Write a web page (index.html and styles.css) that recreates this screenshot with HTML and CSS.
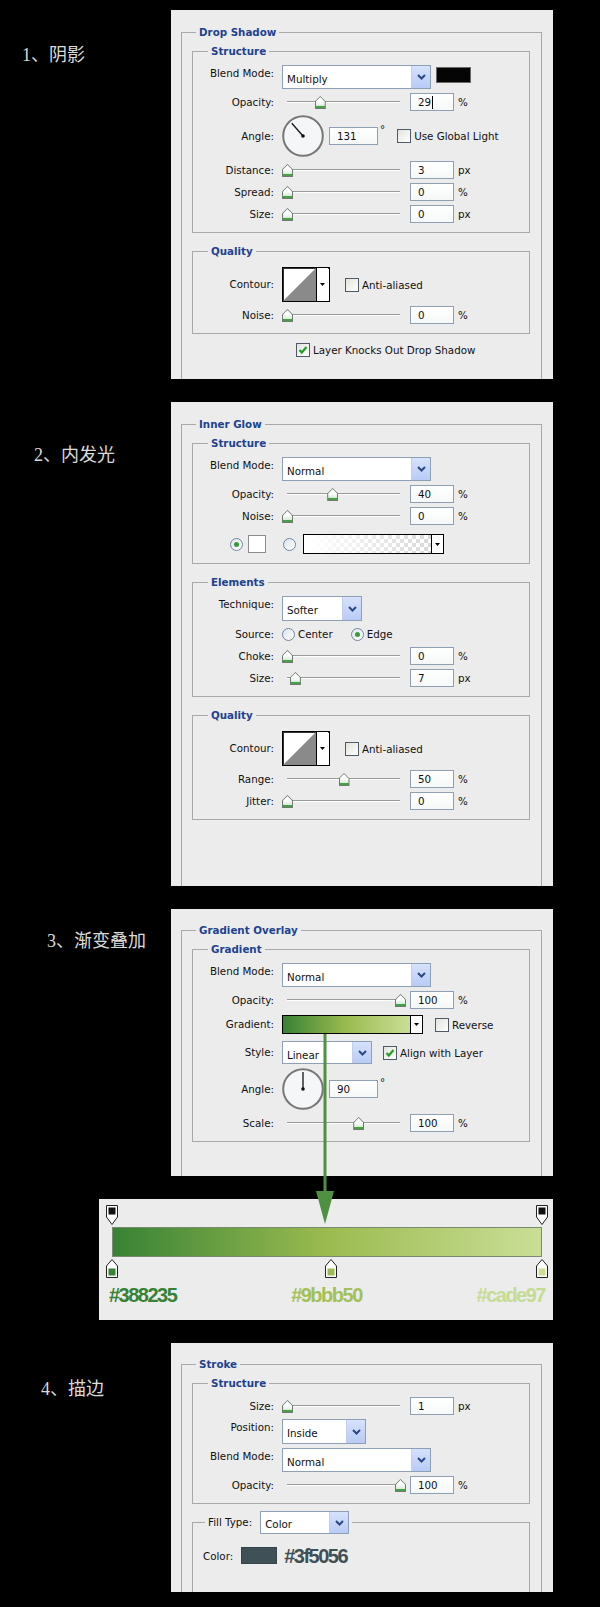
FILE: index.html
```html
<!DOCTYPE html>
<html lang="zh-CN">
<head>
  <meta charset="UTF-8" />
  <title>图层样式 - 阴影 / 内发光 / 渐变叠加 / 描边</title>
  <link rel="stylesheet" href="styles.css">
</head>
<body>

<div class="page">

  <!-- 1. Drop Shadow -->
  <section class="step step-1">
    <h2 class="step-title">1、阴影</h2>
    <div class="panel panel-1">
      <fieldset class="group group-outer">
        <legend>Drop Shadow</legend>
        <fieldset class="group">
          <legend>Structure</legend>
          <div class="rows">
            <div class="row row-select">
              <span class="lbl">Blend Mode:</span>
              <div class="select select-blend"><span class="select-text">Multiply</span><span class="select-btn"><svg width="9" height="6" viewBox="0 0 9 6"><path d="M1 1l3.5 3.5L8 1"/></svg></span></div>
              <span class="color-chip"></span>
            </div>
            <div class="row">
              <span class="lbl">Opacity:</span>
              <div class="slider"><div class="track"><span class="thumb" style="left: 29%"></span></div></div>
              <span class="num">29<i class="caret"></i></span>
              <span class="unit">%</span>
            </div>
            <div class="row row-dial">
              <span class="lbl">Angle:</span>
              <svg class="dial" width="42" height="42" viewBox="0 0 42 42"><circle class="dial-face" cx="21" cy="21" r="19.8"/><line class="dial-hand" x1="21" y1="21" x2="9.8" y2="8.2"/><circle class="dial-pin" cx="21" cy="21" r="1.8"/></svg>
              <span class="num num-angle">131</span>
              <span class="deg">°</span>
              <span class="check check-global"></span>
              <span class="check-text">Use Global Light</span>
            </div>
            <div class="row">
              <span class="lbl">Distance:</span>
              <div class="slider"><div class="track"><span class="thumb" style="left: 0%"></span></div></div>
              <span class="num">3</span>
              <span class="unit">px</span>
            </div>
            <div class="row">
              <span class="lbl">Spread:</span>
              <div class="slider"><div class="track"><span class="thumb" style="left: 0%"></span></div></div>
              <span class="num">0</span>
              <span class="unit">%</span>
            </div>
            <div class="row">
              <span class="lbl">Size:</span>
              <div class="slider"><div class="track"><span class="thumb" style="left: 0%"></span></div></div>
              <span class="num">0</span>
              <span class="unit">px</span>
            </div>
          </div>
        </fieldset>
        <fieldset class="group">
          <legend>Quality</legend>
          <div class="rows">
            <div class="row row-contour">
              <span class="lbl">Contour:</span>
              <div class="contour">
                <svg class="contour-graph" width="33" height="33" viewBox="0 0 33 33"><polygon points="0,33 33,0 33,33"/></svg>
                <span class="drop-btn"><svg width="5" height="3" viewBox="0 0 5 3"><path d="M0 0h5L2.5 3z"/></svg></span>
              </div>
              <span class="check check-aa"></span>
              <span class="check-text">Anti-aliased</span>
            </div>
            <div class="row">
              <span class="lbl">Noise:</span>
              <div class="slider"><div class="track"><span class="thumb" style="left: 0%"></span></div></div>
              <span class="num">0</span>
              <span class="unit">%</span>
            </div>
          </div>
        </fieldset>
        <div class="row row-knock">
          <span class="check"><svg width="10" height="10" viewBox="0 0 10 10"><path d="M1.5 5l2.3 2.5L8.5 2"/></svg></span>
          <span class="check-text">Layer Knocks Out Drop Shadow</span>
        </div>
      </fieldset>
    </div>
  </section>

  <!-- 2. Inner Glow -->
  <section class="step step-2">
    <h2 class="step-title">2、内发光</h2>
    <div class="panel panel-2">
      <fieldset class="group group-outer">
        <legend>Inner Glow</legend>
        <fieldset class="group">
          <legend>Structure</legend>
          <div class="rows">
            <div class="row row-select">
              <span class="lbl">Blend Mode:</span>
              <div class="select select-blend"><span class="select-text">Normal</span><span class="select-btn"><svg width="9" height="6" viewBox="0 0 9 6"><path d="M1 1l3.5 3.5L8 1"/></svg></span></div>
            </div>
            <div class="row">
              <span class="lbl">Opacity:</span>
              <div class="slider"><div class="track"><span class="thumb" style="left: 40%"></span></div></div>
              <span class="num">40</span>
              <span class="unit">%</span>
            </div>
            <div class="row">
              <span class="lbl">Noise:</span>
              <div class="slider"><div class="track"><span class="thumb" style="left: 0%"></span></div></div>
              <span class="num">0</span>
              <span class="unit">%</span>
            </div>
            <div class="row row-fill">
              <span class="radio on"></span>
              <span class="fill-chip"></span>
              <span class="radio radio-gradient"></span>
              <div class="grad-picker">
                <span class="grad-preview"></span>
                <span class="drop-btn"><svg width="5" height="3" viewBox="0 0 5 3"><path d="M0 0h5L2.5 3z"/></svg></span>
              </div>
            </div>
          </div>
        </fieldset>
        <fieldset class="group">
          <legend>Elements</legend>
          <div class="rows">
            <div class="row row-select row-select-tall">
              <span class="lbl">Technique:</span>
              <div class="select select-technique"><span class="select-text">Softer</span><span class="select-btn"><svg width="9" height="6" viewBox="0 0 9 6"><path d="M1 1l3.5 3.5L8 1"/></svg></span></div>
            </div>
            <div class="row">
              <span class="lbl">Source:</span>
              <span class="radio"></span>
              <span class="check-text">Center</span>
              <span class="radio on radio-edge"></span>
              <span class="check-text">Edge</span>
            </div>
            <div class="row">
              <span class="lbl">Choke:</span>
              <div class="slider"><div class="track"><span class="thumb" style="left: 0%"></span></div></div>
              <span class="num">0</span>
              <span class="unit">%</span>
            </div>
            <div class="row">
              <span class="lbl">Size:</span>
              <div class="slider"><div class="track"><span class="thumb" style="left: 7%"></span></div></div>
              <span class="num">7</span>
              <span class="unit">px</span>
            </div>
          </div>
        </fieldset>
        <fieldset class="group">
          <legend>Quality</legend>
          <div class="rows">
            <div class="row row-contour">
              <span class="lbl">Contour:</span>
              <div class="contour">
                <svg class="contour-graph" width="33" height="33" viewBox="0 0 33 33"><polygon points="0,33 33,0 33,33"/></svg>
                <span class="drop-btn"><svg width="5" height="3" viewBox="0 0 5 3"><path d="M0 0h5L2.5 3z"/></svg></span>
              </div>
              <span class="check check-aa"></span>
              <span class="check-text">Anti-aliased</span>
            </div>
            <div class="row">
              <span class="lbl">Range:</span>
              <div class="slider"><div class="track"><span class="thumb" style="left: 50%"></span></div></div>
              <span class="num">50</span>
              <span class="unit">%</span>
            </div>
            <div class="row">
              <span class="lbl">Jitter:</span>
              <div class="slider"><div class="track"><span class="thumb" style="left: 0%"></span></div></div>
              <span class="num">0</span>
              <span class="unit">%</span>
            </div>
          </div>
        </fieldset>
      </fieldset>
    </div>
  </section>

  <!-- 3. Gradient Overlay -->
  <section class="step step-3">
    <h2 class="step-title">3、渐变叠加</h2>
    <div class="panel panel-3">
      <fieldset class="group group-outer">
        <legend>Gradient Overlay</legend>
        <fieldset class="group">
          <legend>Gradient</legend>
          <div class="rows">
            <div class="row row-select">
              <span class="lbl">Blend Mode:</span>
              <div class="select select-blend"><span class="select-text">Normal</span><span class="select-btn"><svg width="9" height="6" viewBox="0 0 9 6"><path d="M1 1l3.5 3.5L8 1"/></svg></span></div>
            </div>
            <div class="row">
              <span class="lbl">Opacity:</span>
              <div class="slider"><div class="track"><span class="thumb" style="left: 100%"></span></div></div>
              <span class="num">100</span>
              <span class="unit">%</span>
            </div>
            <div class="row row-gradient">
              <span class="lbl">Gradient:</span>
              <div class="grad-bar">
                <span class="grad-fill"></span>
                <span class="drop-btn"><svg width="5" height="3" viewBox="0 0 5 3"><path d="M0 0h5L2.5 3z"/></svg></span>
              </div>
              <span class="check check-reverse"></span>
              <span class="check-text">Reverse</span>
            </div>
            <div class="row row-select row-style">
              <span class="lbl">Style:</span>
              <div class="select select-style"><span class="select-text">Linear</span><span class="select-btn"><svg width="9" height="6" viewBox="0 0 9 6"><path d="M1 1l3.5 3.5L8 1"/></svg></span></div>
              <span class="check check-align"><svg width="10" height="10" viewBox="0 0 10 10"><path d="M1.5 5l2.3 2.5L8.5 2"/></svg></span>
              <span class="check-text">Align with Layer</span>
            </div>
            <div class="row row-dial">
              <span class="lbl">Angle:</span>
              <svg class="dial" width="42" height="42" viewBox="0 0 42 42"><circle class="dial-face" cx="21" cy="21" r="19.8"/><line class="dial-hand" x1="21" y1="21" x2="21" y2="4"/><circle class="dial-pin" cx="21" cy="21" r="1.8"/></svg>
              <span class="num num-angle">90</span>
              <span class="deg">°</span>
            </div>
            <div class="row">
              <span class="lbl">Scale:</span>
              <div class="slider"><div class="track"><span class="thumb" style="left: 63%"></span></div></div>
              <span class="num">100</span>
              <span class="unit">%</span>
            </div>
          </div>
        </fieldset>
      </fieldset>
    </div>
  </section>

  <!-- gradient stops detail -->
  <div class="gradient-detail">
    <div class="stops">
      <span class="stop" style="left: 0%"><svg width="12" height="20" viewBox="0 0 12 20"><path class="stop-shape" d="M.5 .5h11V12L6 19.5 .5 12z"/><rect x="2.5" y="2.5" width="7" height="7" fill="#111"/></svg></span>
      <span class="stop" style="left: 100%"><svg width="12" height="20" viewBox="0 0 12 20"><path class="stop-shape" d="M.5 .5h11V12L6 19.5 .5 12z"/><rect x="2.5" y="2.5" width="7" height="7" fill="#111"/></svg></span>
    </div>
    <div class="gradient-bar"></div>
    <div class="stops stops-bottom">
      <span class="stop" style="left: 0%"><svg width="12" height="19" viewBox="0 0 12 19"><path class="stop-shape" d="M6 .5L11.5 7v11.5H.5V7z"/><rect x="2.5" y="9.5" width="7" height="7" fill="#388235"/></svg></span>
      <span class="stop" style="left: 51%"><svg width="12" height="19" viewBox="0 0 12 19"><path class="stop-shape" d="M6 .5L11.5 7v11.5H.5V7z"/><rect x="2.5" y="9.5" width="7" height="7" fill="#9bbb50"/></svg></span>
      <span class="stop" style="left: 100%"><svg width="12" height="19" viewBox="0 0 12 19"><path class="stop-shape" d="M6 .5L11.5 7v11.5H.5V7z"/><rect x="2.5" y="9.5" width="7" height="7" fill="#cade97"/></svg></span>
    </div>
    <div class="hex-row">
      <span class="hex hex-dark">#388235</span>
      <span class="hex hex-mid">#9bbb50</span>
      <span class="hex hex-light">#cade97</span>
    </div>
  </div>

  <!-- 4. Stroke -->
  <section class="step step-4">
    <h2 class="step-title">4、描边</h2>
    <div class="panel panel-4">
      <fieldset class="group group-outer">
        <legend>Stroke</legend>
        <fieldset class="group">
          <legend>Structure</legend>
          <div class="rows">
            <div class="row">
              <span class="lbl">Size:</span>
              <div class="slider"><div class="track"><span class="thumb" style="left: 0%"></span></div></div>
              <span class="num">1</span>
              <span class="unit">px</span>
            </div>
            <div class="row row-select row-select-tall">
              <span class="lbl">Position:</span>
              <div class="select select-position"><span class="select-text">Inside</span><span class="select-btn"><svg width="9" height="6" viewBox="0 0 9 6"><path d="M1 1l3.5 3.5L8 1"/></svg></span></div>
            </div>
            <div class="row row-select">
              <span class="lbl">Blend Mode:</span>
              <div class="select select-blend"><span class="select-text">Normal</span><span class="select-btn"><svg width="9" height="6" viewBox="0 0 9 6"><path d="M1 1l3.5 3.5L8 1"/></svg></span></div>
            </div>
            <div class="row">
              <span class="lbl">Opacity:</span>
              <div class="slider"><div class="track"><span class="thumb" style="left: 100%"></span></div></div>
              <span class="num">100</span>
              <span class="unit">%</span>
            </div>
          </div>
        </fieldset>
        <fieldset class="group group-fill">
          <legend class="fill-legend">
            <span>Fill Type:</span>
            <span class="select select-fill"><span class="select-text">Color</span><span class="select-btn"><svg width="9" height="6" viewBox="0 0 9 6"><path d="M1 1l3.5 3.5L8 1"/></svg></span></span>
          </legend>
          <div class="color-row">
            <span>Color:</span>
            <span class="stroke-chip"></span>
            <span class="hex hex-stroke">#3f5056</span>
          </div>
        </fieldset>
      </fieldset>
    </div>
  </section>

  <!-- arrow from gradient bar down to the stops detail -->
  <svg class="arrow" width="18" height="190" viewBox="0 0 18 190"><rect x="7.5" y="0" width="3" height="158"/><path d="M0 157H18L9 190z"/></svg>

</div>

</body>
</html>
```

FILE: styles.css
```css
body {
  margin: 0;
  background-color: #000;
  font-family: "DejaVu Sans", Verdana, sans-serif;
  font-size: 10.3px;
  color: #111;
}
.page {
  position: relative;
  width: 600px;
  padding-top: 10px;
  display: flex;
  flex-direction: column;
  gap: 23px;
}

/* left hand captions */
.step {
  display: flex;
}
.step-title {
  width: 171px;
  margin: 0;
  box-sizing: border-box;
  font-family: "Liberation Serif", "Noto Sans CJK SC", serif;
  font-size: 18px;
  font-weight: normal;
  line-height: 18px;
  color: #dadada;
}
.step-1 .step-title { padding: 36px 0 0 22px; }
.step-2 .step-title { padding: 44px 0 0 34px; }
.step-3 .step-title { padding: 23px 0 0 47px; }
.step-4 .step-title { padding: 37px 0 0 41px; }

/* dialog panels */
.panel {
  width: 382px;
  box-sizing: border-box;
  padding: 15px 11px 0 10px;
  background-color: #ececec;
  display: flex;
  flex-direction: column;
  overflow: hidden;
}
.panel-1 { height: 369px; padding-top: 16px; }
.panel-2 { height: 484px; padding-top: 16px; }
.panel-3 { height: 267px; }
.panel-4 { height: 249px; }

fieldset.group {
  margin: 0;
  padding: 7px 0 9px;
  border: 1px solid #a9a9a9;
  min-width: 0;
}
.group legend {
  margin-left: 15px;
  padding: 0 3px;
  font-weight: bold;
  line-height: 13px;
  color: #1e428f;
}
fieldset.group-outer {
  flex: 1;
  padding: 6px 11px 0 10px;
  border-bottom: none;
}
/* the legend already sits after the fieldset's 10px left padding */
.group-outer > legend {
  margin-left: 4px;
}
.group + .group {
  margin-top: 12px;
}

/* rows */
.rows {
  display: flex;
  flex-direction: column;
  gap: 4px;
}
.row {
  display: flex;
  align-items: center;
  height: 18px;
}
.row-select {
  height: 24px;
  align-items: flex-start;
}
.row-select .lbl {
  padding-top: 2px;
}
.row-select-tall { height: 25px; }
.row-dial { height: 42px; }
.row-contour { height: 35px; margin-top: 2px; }
.row-gradient { height: 19px; margin-top: 2px; }
.row-style { height: 23px; margin-top: 3px; align-items: center; }
.row-style .lbl { padding-top: 0; }
.row-fill { height: 20px; margin-top: 5px; padding-left: 37px; }
.row-knock { height: 14px; margin-top: 9px; padding-left: 104px; }

.lbl {
  flex: none;
  width: 81px;
  margin-right: 8px;
  text-align: right;
  line-height: 13px;
}

/* drop-down */
.select {
  display: flex;
  height: 100%;
  box-sizing: border-box;
  border: 1px solid #8ea0b6;
  background-color: #fff;
  flex: none;
}
.select-text {
  flex: 1;
  padding: 7px 0 0 4px;
  line-height: 13px;
}
.select-btn {
  width: 18px;
  display: flex;
  align-items: center;
  justify-content: center;
  background: linear-gradient(#d6e1fc, #b9cbf5);
  border-left: 1px solid #c3d0ec;
}
.select-btn svg {
  fill: none;
  stroke: #2b4885;
  stroke-width: 2;
}
.select-blend { width: 149px; }
.select-technique { width: 80px; }
.select-position { width: 84px; }
.select-style { width: 90px; }
.select-fill { width: 89px; height: 23px; margin-left: 8px; }
.select-fill .select-text { padding-top: 6px; }

.color-chip {
  width: 35px;
  height: 16px;
  margin: 2px 0 0 5px;
  box-sizing: border-box;
  border: 1px solid #6a6a6a;
  background-color: #050505;
}

/* slider */
.slider {
  position: relative;
  flex: none;
  width: 123px;
  height: 18px;
}
.track {
  position: absolute;
  left: 5px;
  right: 5px;
  top: 8px;
  height: 1px;
  background-color: #9a9a9a;
  border-bottom: 1px solid #fff;
}
.thumb {
  position: absolute;
  top: -5px;
  width: 11px;
  height: 13px;
  margin-left: -5px;
  background-color: #6f7b6f;
  clip-path: polygon(50% 0, 100% 42%, 100% 100%, 0 100%, 0 42%);
}
.thumb::after {
  content: "";
  position: absolute;
  left: 1px;
  right: 1px;
  top: 1px;
  bottom: 1px;
  box-sizing: border-box;
  background: linear-gradient(#fff 50%, #d4ead4);
  border-bottom: 2px solid #46a046;
  clip-path: polygon(50% 0, 100% 42%, 100% 100%, 0 100%, 0 42%);
}

/* number field */
.num {
  flex: none;
  display: flex;
  align-items: center;
  width: 44px;
  height: 18px;
  box-sizing: border-box;
  margin-left: 5px;
  padding-left: 7px;
  border: 1px solid #8fa0b3;
  background: linear-gradient(#fff, #f6f8f8);
}
.num-angle {
  width: 49px;
}
.caret {
  width: 1px;
  height: 13px;
  margin-left: 1px;
  background-color: #000;
}
.unit {
  margin-left: 4px;
}
.deg {
  align-self: flex-start;
  margin: 8px 0 0 2px;
}

/* angle dial */
.dial {
  flex: none;
}
.dial-face {
  fill: #f4f6f7;
  stroke: #777;
  stroke-width: 2;
}
.dial-hand {
  stroke: #111;
  stroke-width: 1.3;
}
.dial-pin {
  fill: #111;
}

/* check boxes and radios */
.check {
  flex: none;
  display: flex;
  align-items: center;
  justify-content: center;
  width: 14px;
  height: 14px;
  box-sizing: border-box;
  border: 1px solid #4f5a66;
  background: linear-gradient(135deg, #e2e2de, #fff);
}
.check svg {
  fill: none;
  stroke: #23a023;
  stroke-width: 2.2;
}
.check-text {
  margin-left: 3px;
}
.check-global { margin-left: 12px; }
.check-aa { margin-left: 15px; }
.check-reverse { margin-left: 12px; }
.check-align { margin-left: 11px; align-self: center; }

.radio {
  flex: none;
  display: flex;
  align-items: center;
  justify-content: center;
  width: 13px;
  height: 13px;
  box-sizing: border-box;
  border: 1px solid #6f87a3;
  border-radius: 50%;
  background: linear-gradient(135deg, #dde4ea, #fff);
}
.radio.on::after {
  content: "";
  width: 5px;
  height: 5px;
  border-radius: 50%;
  background-color: #3a9a3a;
}
.radio-edge { margin-left: 18px; }
.radio-gradient { margin-left: 17px; }

.fill-chip {
  width: 18px;
  height: 18px;
  margin-left: 5px;
  box-sizing: border-box;
  border: 1px solid #8d8d8d;
  background-color: #fff;
}

/* gradient pickers */
.grad-picker,
.grad-bar {
  display: flex;
  width: 141px;
  height: 20px;
  box-sizing: border-box;
  border: 1px solid #000;
  flex: none;
}
.grad-picker {
  margin-left: 7px;
}
.grad-bar {
  height: 19px;
}
.grad-preview {
  flex: 1;
  background:
    linear-gradient(to right, #fff 5%, rgba(255, 255, 255, 0)),
    repeating-conic-gradient(#d9d9d9 0 25%, #fff 0 50%) 0 0 / 8px 8px;
}
.grad-fill {
  flex: 1;
  background: linear-gradient(to right, #388235, #9bbb50, #cade97);
}
.drop-btn {
  width: 11px;
  display: flex;
  align-items: center;
  justify-content: center;
  border-left: 1px solid #000;
  background-color: #fff;
}
.drop-btn svg {
  fill: #000;
}

/* contour */
.contour {
  display: flex;
  width: 48px;
  height: 35px;
  box-sizing: border-box;
  border: 1px solid #000;
  box-shadow: inset 1px 1px 0 #333;
  background-color: #fff;
  flex: none;
}
.contour-graph {
  fill: #8a8a8a;
}

/* fill type group */
.group + .group-fill {
  margin-top: 7px;
  padding: 13px 0 40px 10px;
  border-bottom: none;
}
.group .fill-legend {
  display: flex;
  align-items: center;
  margin-left: 2px;
  font-weight: normal;
  color: #111;
}
.color-row {
  display: flex;
  align-items: center;
  height: 17px;
}
.stroke-chip {
  width: 36px;
  height: 17px;
  margin-left: 8px;
  box-sizing: border-box;
  border: 1px solid #34444a;
  background-color: #3f5056;
}

/* big hex labels */
.hex {
  font-family: "Liberation Sans", Arial, sans-serif;
  font-weight: bold;
  font-size: 20px;
  line-height: 20px;
  letter-spacing: -1.5px;
}
.hex-dark { color: #388235; }
.hex-mid { color: #a3c05a; }
.hex-light { color: #c6dc94; }
.hex-stroke {
  margin-left: 7px;
  color: #3f5056;
}

/* gradient stops detail */
.gradient-detail {
  width: 454px;
  height: 121px;
  margin-left: 99px;
  box-sizing: border-box;
  padding: 6px 0 0 13px;
  background-color: #ececec;
}
.stops {
  position: relative;
  width: 430px;
  height: 20px;
}
.stops-bottom {
  height: 19px;
  margin-top: 2px;
}
.stop {
  position: absolute;
  top: 0;
  width: 12px;
  margin-left: -6px;
}
.stop svg {
  display: block;
}
.stop-shape {
  fill: #fff;
  stroke: #222;
}
.gradient-bar {
  width: 430px;
  height: 30px;
  margin-top: 2px;
  box-sizing: border-box;
  border: 1px solid #7c8a70;
  background: linear-gradient(to right, #388235, #9bbb50, #cade97);
}
.hex-row {
  display: flex;
  justify-content: space-between;
  margin: 7px 8px 0 -3px;
}

.arrow {
  position: absolute;
  left: 316px;
  top: 1034px;
  fill: #4f9140;
}
```
